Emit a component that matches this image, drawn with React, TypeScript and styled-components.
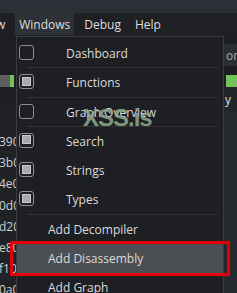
import styled, { createGlobalStyle } from 'styled-components'

const GlobalStyle = createGlobalStyle`
  html, body {
    margin: 0;
    padding: 0;
    background: #1f2124;
    overflow: hidden;
  }
  body {
    font-family: "Open Sans", "Noto Sans", sans-serif;
    font-size: 12px;
    color: #dcdcdc;
  }
`

const Frame = styled.div`
  position: relative;
  width: 237px;
  height: 293px;
  overflow: hidden;
  display: flex;
  flex-direction: column;
`

const TitleBar = styled.div`
  flex-shrink: 0;
  height: 13px;
  background: #2b2f36;
`

const MenuBar = styled.nav`
  flex-shrink: 0;
  display: flex;
  gap: 6px;
  height: 23px;
  margin-left: -25px;
  background: #1e2023;
`

const MenuTitle = styled.div<{ $open?: boolean }>`
  display: flex;
  align-items: center;
  height: 22px;
  padding: 0 4px;
  white-space: nowrap;
  color: #dedede;
  background: ${({ $open }) => ($open ? '#2e3135' : 'transparent')};
`

const Workspace = styled.div`
  flex: 1;
  display: flex;
  flex-direction: column;
  background: #1c1e21;
`

const TopRow = styled.div`
  display: flex;
  height: 39px;
`

const Blank = styled.div`
  flex: 1;
`

const SideTab = styled.div`
  align-self: flex-start;
  width: 13px;
  height: 22px;
  margin-top: 8px;
  display: flex;
  align-items: center;
  padding-left: 2px;
  box-sizing: border-box;
  overflow: hidden;
  color: #a9abae;
  background: #2a2d31;
`

const FeatureBar = styled.div`
  display: flex;
  height: 12px;
`

const Seg = styled.div<{ $w?: number; $c: string }>`
  flex: ${({ $w }) => ($w ? `0 0 ${$w}px` : '1')};
  background: ${({ $c }) => $c};
`

const BottomRow = styled.div`
  flex: 1;
  display: flex;
`

const ListPane = styled.div`
  flex: 1;
  display: flex;
  flex-direction: column;
`

const ListHead = styled.div`
  height: 18px;
`

const ListBody = styled.div`
  flex: 1;
  padding-top: 26px;
  background: #202225;
`

const AddrRow = styled.div`
  height: 21.2px;
  display: flex;
  align-items: center;
  margin-left: -1px;
  white-space: nowrap;
  color: #cfd0d2;
`

const RightCol = styled.div`
  width: 13px;
  display: flex;
  flex-direction: column;
  background: #25292d;
  border-left: 1px solid #1b1d20;
`

const RightCell = styled.div`
  height: 24px;
  display: flex;
  align-items: center;
  padding-left: 1px;
  color: #dedede;
  background: #222528;
`

const Menu = styled.div`
  position: absolute;
  left: 16px;
  top: 36px;
  width: 208px;
  bottom: -40px;
  box-sizing: border-box;
  padding-top: 2px;
  background: #1e1f22;
  border: 1px solid #3a3c40;
`

const Item = styled.div<{ $indent: number; $sep?: boolean; $active?: boolean }>`
  position: relative;
  height: 29.25px;
  display: flex;
  align-items: center;
  padding-left: ${({ $indent }) => $indent}px;
  white-space: nowrap;
  color: #dcdcdc;
  background: ${({ $active }) => ($active ? '#4b4e52' : 'transparent')};

  &::after {
    content: '';
    display: ${({ $sep }) => ($sep ? 'block' : 'none')};
    position: absolute;
    left: 10px;
    right: 5px;
    bottom: 0;
    height: 1px;
    background: #303236;
  }
`

const Highlight = styled.div`
  position: absolute;
  top: -3px;
  bottom: -3px;
  left: -7px;
  right: -7px;
  border: 3px solid #e3000b;
  pointer-events: none;
`

const Check = styled.span<{ $on?: boolean }>`
  position: relative;
  width: 15px;
  height: 15px;
  margin-right: 32px;
  margin-top: -2px;
  box-sizing: border-box;
  border: 1.5px solid #8d8e90;
  border-radius: 3px;

  &::after {
    content: '';
    display: ${({ $on }) => ($on ? 'block' : 'none')};
    position: absolute;
    left: 1.5px;
    top: 1.5px;
    width: 9px;
    height: 9px;
    box-sizing: border-box;
    background: #a7a8aa;
    border: 1px solid #c9cacc;
  }
`

const Watermark = styled.div`
  position: absolute;
  left: 83px;
  top: 106px;
  font-family: "Liberation Sans", Arial, sans-serif;
  font-weight: 700;
  font-size: 24px;
  line-height: 1;
  letter-spacing: -1px;
  color: rgba(140, 168, 140, 0.9);
  pointer-events: none;
`

const checks = [
  { label: 'Dashboard', on: false, sep: true },
  { label: 'Functions', on: true, sep: true },
  { label: 'Graph Overview', on: false, sep: true },
  { label: 'Search', on: true },
  { label: 'Strings', on: true },
  { label: 'Types', on: true, sep: true },
]

const actions = ['Add Decompiler', 'Add Disassembly', 'Add Graph']

const addrs = ['390', '3b0', '4e0', '0d0', 'd20', 'e80', 'f10', '0a0']

export default function App() {
  return (
    <>
      <GlobalStyle />
      <Frame>
        <TitleBar />
        <MenuBar>
          <MenuTitle>View</MenuTitle>
          <MenuTitle $open>Windows</MenuTitle>
          <MenuTitle>Debug</MenuTitle>
          <MenuTitle>Help</MenuTitle>
        </MenuBar>

        <Workspace>
          <TopRow>
            <Blank />
            <SideTab>or</SideTab>
          </TopRow>
          <FeatureBar>
            <Seg $w={10} $c="#5d5e60" />
            <Seg $w={4} $c="#72c35c" />
            <Seg $c="#1c1e21" />
            <Seg $w={11} $c="#72c35c" />
          </FeatureBar>
          <BottomRow>
            <ListPane>
              <ListHead />
              <ListBody>
                {addrs.map((a) => (
                  <AddrRow key={a}>{a}</AddrRow>
                ))}
              </ListBody>
            </ListPane>
            <RightCol>
              <RightCell>y</RightCell>
            </RightCol>
          </BottomRow>
        </Workspace>

        <Menu>
          {checks.map((c) => (
            <Item key={c.label} $indent={2} $sep={c.sep}>
              <Check $on={c.on} />
              {c.label}
            </Item>
          ))}
          {actions.map((a) => (
            <Item key={a} $indent={31} $active={a === 'Add Disassembly'}>
              {a === 'Add Disassembly' && <Highlight />}
              {a}
            </Item>
          ))}
        </Menu>

        <Watermark>XSS.is</Watermark>
      </Frame>
    </>
  )
}
